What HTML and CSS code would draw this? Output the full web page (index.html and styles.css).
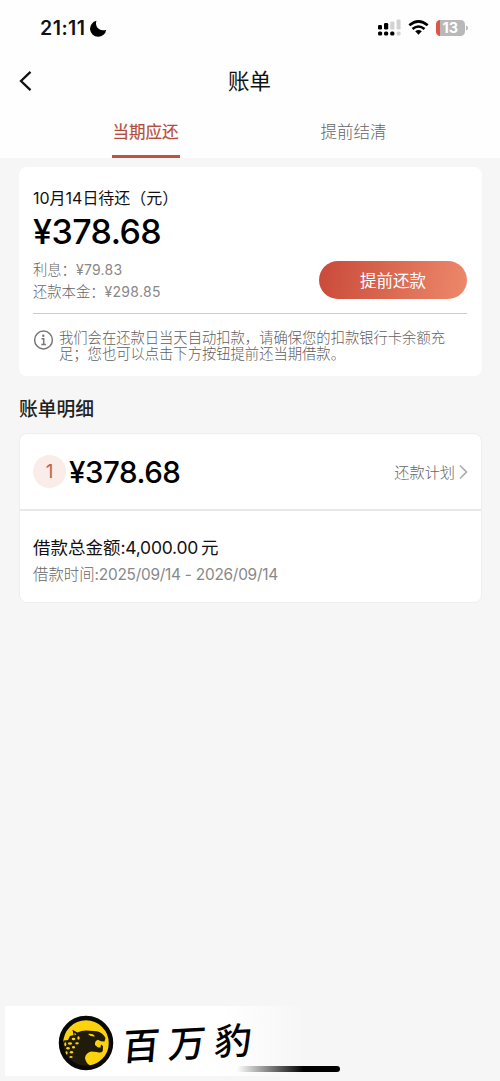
FILE: index.html
```html
<!DOCTYPE html>
<html lang="zh-CN">
<head>
<meta charset="utf-8">
<title>账单</title>
<link rel="stylesheet" href="styles.css">
</head>
<body>
<div class="screen">
  <header class="header">
    <div class="status">
      <span class="time">21:11</span>
      <svg class="moon" width="17" height="17" viewBox="0 0 17 17"><path d="M6.500 .8C4.800 4.500 7.500 10 12.500 10.300 14 10.400 15.200 10.200 16.200 9.700A8.100 8.100 0 1 1 6.500 .8Z"/></svg>
      <svg class="status-icons" width="92" height="20" viewBox="0 0 92 20">
        <g fill="#000"><rect x="1" y="7" width="4" height="4.500" rx="1.300"/><rect x="7" y="5" width="4.200" height="6.500" rx="1.300"/><rect x="1" y="13.500" width="4.200" height="4" rx="1.500"/><rect x="7" y="13.500" width="4.200" height="4" rx="1.500"/><rect x="13.200" y="13.500" width="4.200" height="4" rx="1.500"/></g>
        <g fill="#d2d2d2"><rect x="13.200" y="3.500" width="4.200" height="8" rx="1.300"/><rect x="19.600" y="1.500" width="4" height="10" rx="1.300"/><rect x="19.600" y="13.500" width="4" height="4" rx="1.500"/></g>
        <g fill="none" stroke="#000" stroke-width="2.600"><path d="M32.300 7.200Q41.500 -.6 50.700 7.200"/><path d="M35.500 11Q41.500 6 47.500 11"/></g>
        <path d="M38.200 13.300Q41.500 10.500 44.800 13.300L41.500 16.700Z"/>
        <defs><clipPath id="cell"><rect x="59" y="2" width="29" height="16" rx="4.500"/></clipPath></defs>
        <g clip-path="url(#cell)"><path fill="#b8b8b8" d="M58 1h30v18H58z"/><path fill="#df5548" d="M58 1h5v18h-5z"/></g>
        <path fill="#b8b8b8" d="M89 7.500Q91 8 91 10T89 12.500Z"/>
        <text class="battery" x="65.500" y="15.300">13</text>
      </svg>
    </div>
    <div class="nav">
      <svg class="back" width="14" height="22" viewBox="0 0 14 22"><path d="M12.500 1.800 3 11l9.500 9.200"/></svg>
      <h1 class="title">账单</h1>
    </div>
    <nav class="tabs">
      <span class="tab tab-active">当期应还</span>
      <span class="tab">提前结清</span>
    </nav>
  </header>
  <main class="content">
    <section class="card due">
      <p class="due-date"><span class="date-num">10</span>月<span class="date-num">14</span>日待还（元）</p>
      <p class="due-amount">¥378.68</p>
      <div class="due-row">
        <div class="breakdown">
          <p class="interest">利息：<span class="num">¥79.83</span></p>
          <p class="principal">还款本金：<span class="num">¥298.85</span></p>
        </div>
        <button class="pay">提前还款</button>
      </div>
      <div class="notice">
        <svg width="22" height="22" viewBox="0 0 22 22"><circle cx="10.500" cy="10" r="8.900" fill="none" stroke="#777" stroke-width="1.500"/><circle cx="10.300" cy="5.700" r="1.200" fill="#777"/><path d="M8.500 8.700h2.200v5.800M8.300 14.500h4.600" fill="none" stroke="#777" stroke-width="1.500"/></svg>
        <p>我们会在还款日当天自动扣款，请确保您的扣款银行卡余额充<br>足；您也可以点击下方按钮提前还当期借款。</p>
      </div>
    </section>
    <h2 class="section-title">账单明细</h2>
    <section class="card bill">
      <div class="bill-top">
        <span class="index">1</span>
        <span class="bill-amount">¥378.68</span>
        <span class="plan">还款计划</span>
        <svg width="10" height="16" viewBox="0 0 10 16"><path d="m1 1.500 6.500 6.500L1 14.500" fill="none" stroke="#aaa" stroke-width="1.600"/></svg>
      </div>
      <div class="bill-info">
        <p class="total">借款总金额<span class="total-num">:4,000.00</span>元</p>
        <p class="period">借款时间<span class="period-num">:2025/09/14 - 2026/09/14</span></p>
      </div>
    </section>
  </main>
  <footer class="brand">
    <svg class="logo" width="56" height="56" viewBox="0 0 56 56">
      <circle cx="28" cy="28" r="25" fill="#fbd20c"/>
      <path fill="#211b0b" d="M4 29 6 25.500 10 25 12 21 15.500 20 14.500 14.800 19.500 17.500Q23 15.500 28 15.500L39 16.300Q45 18 47.500 23L46.500 26.500 43 26.300 40 24.700Q36.500 25.500 37 30L40 32.500 42.500 32.500 43 29.500 45 31 44.800 36Q43 38.500 39 37L33 36.500Q27.500 38 27 43 27.500 48 33 51L28 54 18 52 9 45 4 38Z"/>
      <g fill="#fbd20c"><path d="M30 19q5-.8 7 2.300-5 .6-7-2.300Z"/><path d="M16.300 18l2 1-1.500 1.500Z"/><ellipse cx="20.500" cy="23" rx="1.200" ry="1.700"/><ellipse cx="15.500" cy="24" rx="1.800" ry="1.200"/><ellipse cx="19" cy="28.300" rx="1.800" ry="1.100"/><ellipse cx="12" cy="28.500" rx="2.100" ry="1.200"/><ellipse cx="7.300" cy="29.300" rx="1" ry="2"/><ellipse cx="15.500" cy="32.200" rx="1.500" ry="1.200"/><ellipse cx="10" cy="33.300" rx="1.800" ry="1.200"/><ellipse cx="13.500" cy="37.300" rx="1.700" ry="1.300"/><ellipse cx="8.500" cy="38" rx="1.200" ry="1.800"/><ellipse cx="13" cy="42" rx="1.700" ry="1"/></g>
      <circle cx="28" cy="28" r="25" fill="none" stroke="#080908" stroke-width="4.500"/>
    </svg>
    <p class="brand-name"><span>百</span><span>万</span><span>豹</span></p>
    <div class="home-bar"></div>
  </footer>
</div>
</body>
</html>
```

FILE: styles.css
```css
* { box-sizing: border-box; }
body, h1, h2, p { margin: 0; }
body {
  background: #f6f6f6;
  color: #111;
  font-family: Inter, "Noto Sans CJK SC", sans-serif;
}
svg { display: block; flex: none; }
.screen { width: 500px; height: 1081px; display: flex; flex-direction: column; overflow: hidden; }
.header { height: 158px; background: #fefefe; }
.status { height: 56px; padding: 0 31px 0 40px; display: flex; align-items: center; }
.time { font-size: 19.500px; font-weight: 600; letter-spacing: .5px; width: 50px; white-space: nowrap; }
.status-icons { margin-left: auto; }
.battery { fill: #fff; font: 700 14.500px Inter, sans-serif; }
.nav { height: 50px; padding-left: 18px; display: flex; align-items: center; }
.back path { fill: none; stroke: #111; stroke-width: 2.300; }
.title { flex: 1; padding-right: 33px; text-align: center; font-size: 21.500px; line-height: 30px; font-weight: 400; }
.tabs { height: 52px; padding: 0 41px; display: grid; grid-template-columns: 1fr 1fr; justify-items: center; }
.tab { width: 68px; height: 52px; font-size: 16.500px; line-height: 53px; color: #666; white-space: nowrap; text-align: center; font-weight: 300; }
.tab:last-child { margin-right: 2px; }
.tab-active { color: #b34d3e; border-bottom: 3px solid #bd5342; font-weight: 400; -webkit-text-stroke: .2px #b34d3e; }
.content { flex: 1; padding: 9px 18px 0 19px; }
.card { background: #fff; border-radius: 8px; }
.due { height: 209px; padding: 18px 15px 0 14px; }
.due-date { font-size: 16px; line-height: 26px; letter-spacing: -.05px; white-space: nowrap; }
.date-num { font-size: 16px; letter-spacing: 0; }
.due-amount { font-size: 34px; line-height: 42px; font-weight: 500; letter-spacing: -.55px; color: #000; white-space: nowrap; }
.due-row { height: 61px; display: flex; justify-content: space-between; border-bottom: 1.500px solid #ccc; }
.breakdown { padding-top: 6px; font-size: 14.300px; line-height: 21.500px; color: #666; font-weight: 300; white-space: nowrap; }
.num { font-size: 14px; letter-spacing: .3px; font-weight: 400; color: #888; }
.pay {
  width: 148px; height: 38px; margin-top: 8px; padding: 0; border: 0; border-radius: 20px;
  background: linear-gradient(100deg, #c94a39, #ed896b);
  color: #fff; font: 16.500px "Noto Sans CJK SC", sans-serif;
}
.notice { padding-top: 16px; display: flex; gap: 4px; color: #606060; font-size: 14.300px; line-height: 16px; font-weight: 300; white-space: nowrap; }
.section-title { height: 57px; padding-top: 4px; font-size: 18.800px; line-height: 59px; font-weight: 500; color: #222; }
.bill { height: 170px; border: 1.500px solid #eee; }
.bill-top { height: 77px; padding: 0 12px 0 13px; display: flex; align-items: center; border-bottom: 2px solid #e9e9e9; }
.index { width: 33px; height: 33px; border-radius: 50%; background: #faece9; color: #bd6556; font-size: 19px; line-height: 33px; text-align: center; }
.bill-amount { margin-left: 3px; font-size: 29.500px; font-weight: 500; letter-spacing: -.45px; color: #000; }
.plan { margin: -2px 4px 0 auto; color: #666; font-size: 15.200px; font-weight: 300; }
.bill-info { padding: 23px 13px; }
.total { font-size: 17.500px; line-height: 28px; }
.total-num { font-size: 17.500px; letter-spacing: -.25px; margin-right: 3px; }
.period { font-size: 15.400px; line-height: 25px; color: #666; font-weight: 300; }
.period-num { font-size: 15.400px; font-weight: 400; letter-spacing: -.24px; color: #888; }
.brand { position: relative; width: 300px; height: 70px; margin: 0 0 5px 5px; padding-left: 53px; display: flex; align-items: center; background: linear-gradient(90deg, #fff 72%, #f6f6f6); }
.logo { margin-top: 3px; }
.brand-name { display: flex; gap: 9px; margin-left: 9px; color: #000; font: 500 37px/66px "Noto Sans CJK SC", sans-serif; transform: skew(-5deg, -3deg); }
.home-bar { position: absolute; left: 232px; top: 60px; width: 103px; height: 6px; border-radius: 3px; background: linear-gradient(90deg, transparent, #000 65%); }
```
